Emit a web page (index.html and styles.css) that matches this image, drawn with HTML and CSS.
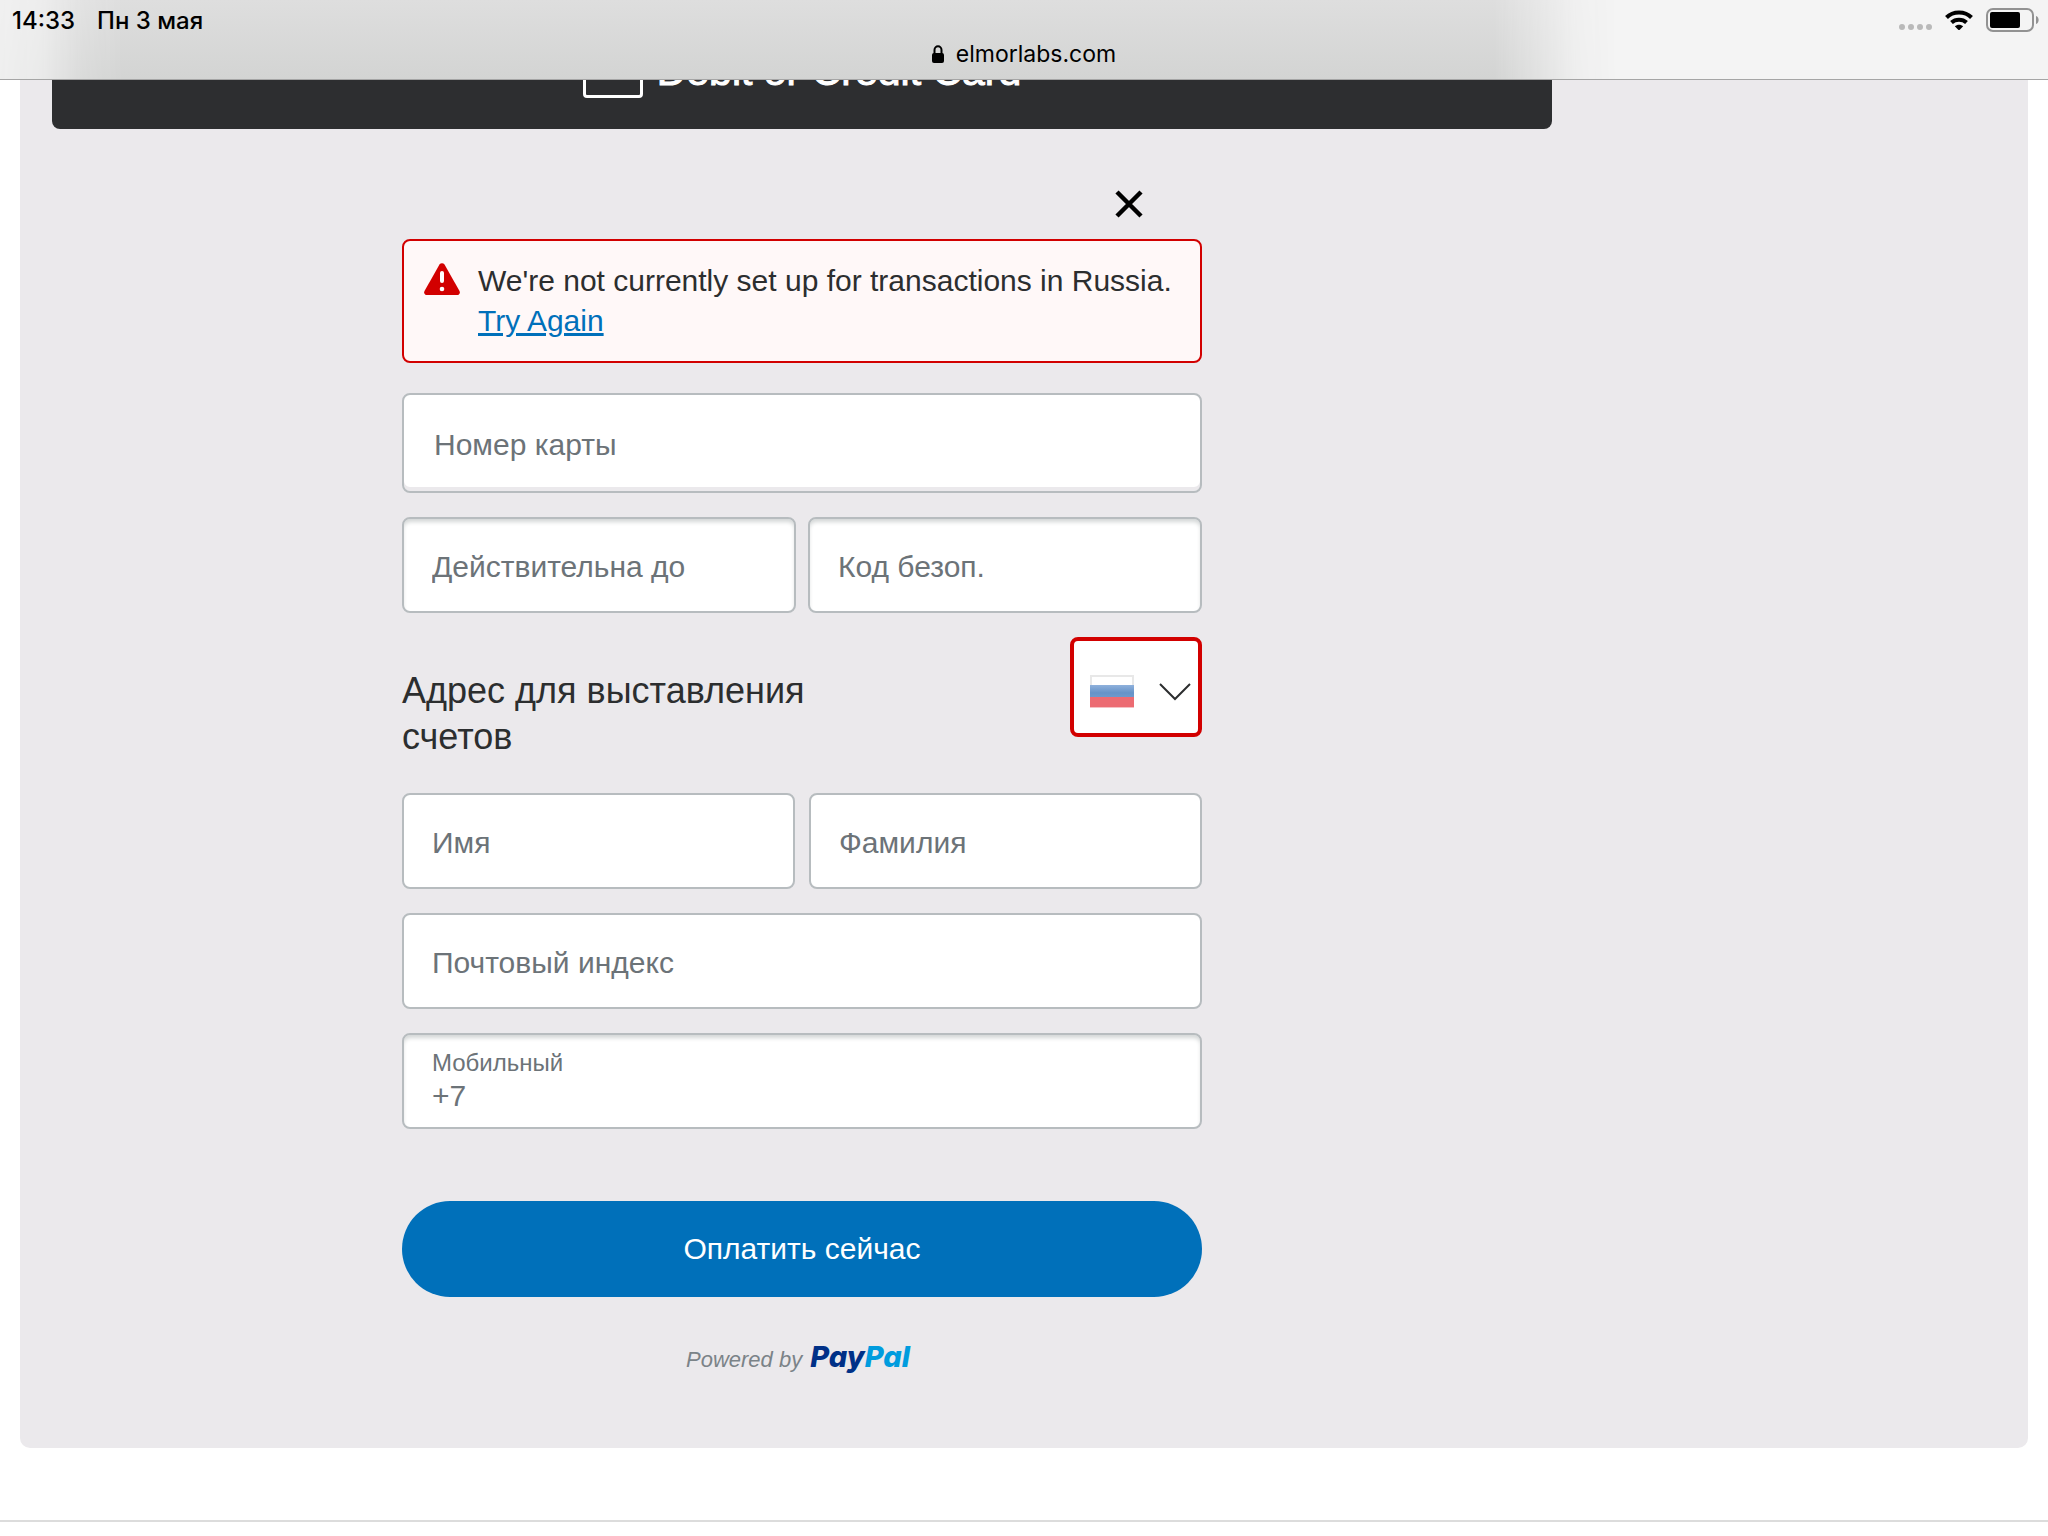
FILE: index.html
```html
<!DOCTYPE html>
<html lang="ru">
<head>
  <meta charset="UTF-8">
  <meta name="viewport" content="width=device-width, initial-scale=1.0">
  <title>elmorlabs.com</title>
  <link rel="stylesheet" href="styles.css">
</head>
<body>
<header class="browser-bar">
  <div class="status">
    <div class="status-left">
      <span>14:33</span>
      <span>Пн 3 мая</span>
    </div>
    <div class="status-right">
      <div class="dots"><i></i><i></i><i></i><i></i></div>
      <svg class="wifi" width="28" height="20" viewBox="0 0 28 20">
        <g fill="none" stroke="#000" stroke-width="4">
          <path d="M1.500 7.500C8 .8 20 .8 26.500 7.500"/>
          <path d="M6.500 12.500C10.500 8.700 17.500 8.700 21.500 12.500"/>
        </g>
        <path d="M14 20.500l-4.200-4.200c2.200-2.200 6.200-2.200 8.400 0z"/>
      </svg>
      <svg class="battery" width="54" height="24" viewBox="0 0 54 24">
        <rect x="1" y="1" width="46" height="22" rx="6" fill="none" stroke="#929292" stroke-width="2"/>
        <rect x="4" y="4" width="30" height="16" rx="2"/>
        <path d="M50 8c3.500 1 3.500 7 0 8z" fill="#929292"/>
      </svg>
    </div>
  </div>
  <div class="address">
    <svg width="12" height="18" viewBox="0 0 12 18">
      <path d="M2.500 9V5a3.500 3.800 0 0 1 7 0v4" fill="none" stroke="#000" stroke-width="2"/>
      <rect y="8" width="12" height="10" rx="2"/>
    </svg>
    <span>elmorlabs.com</span>
  </div>
</header>

<main class="panel">
  <div class="checkout">
    <button class="card-button" type="button"><span class="card-icon"></span>Debit or Credit Card</button>

    <form class="card-form">
      <button class="close" type="button" aria-label="Close">
        <svg width="28" height="28" viewBox="0 0 28 28"><path d="M2 2l24 24M26 2L2 26" stroke="#000" stroke-width="4.500"/></svg>
      </button>

      <div class="alert" role="alert">
        <svg width="36" height="32" viewBox="0 0 36 32">
          <path d="M15.500 1.500a3 3 0 0 1 5 0l15 26.500c1 2-.2 4-2.500 4H3c-2.300 0-3.500-2-2.500-4z" fill="#d20000"/>
          <path d="M18 10v8" stroke="#fff" stroke-width="4" stroke-linecap="round"/>
          <circle cx="18" cy="26" r="2.300" fill="#fff"/>
        </svg>
        <p>We're not currently set up for transactions in Russia. <a href="#">Try Again</a></p>
      </div>

      <input class="field number" type="text" placeholder="Номер карты" aria-label="Номер карты">
      <div class="row">
        <input class="field inset" type="text" placeholder="Действительна до" aria-label="Действительна до">
        <input class="field inset" type="text" placeholder="Код безоп." aria-label="Код безоп.">
      </div>

      <div class="billing">
        <h2 id="billing-title">Адрес для выставления счетов</h2>
        <div class="country">
          <select aria-labelledby="billing-title">
            <option value="RU" aria-label="RU"></option>
          </select>
          <svg class="flag" width="44" height="33" viewBox="0 0 44 33">
            <defs>
              <linearGradient id="blue" x1="0" y1="0" x2="0" y2="1">
                <stop offset="0" stop-color="#8fb1dc"/>
                <stop offset="0.600" stop-color="#6693c8"/>
                <stop offset="1" stop-color="#6f9acd"/>
              </linearGradient>
            </defs>
            <rect width="44" height="33" fill="#e8e8e8"/>
            <rect x="2" y="2" width="40" height="9" fill="#fff"/>
            <rect y="10" width="44" height="13" fill="url(#blue)"/>
            <rect y="22" width="44" height="10" fill="#ec6b72"/>
            <rect y="32" width="44" height="1" fill="#f5c0c3"/>
          </svg>
          <svg class="chevron" width="32" height="18" viewBox="0 0 32 18">
            <path d="M1 1l15 15L31 1" fill="none" stroke="#2c2e2f" stroke-width="2"/>
          </svg>
        </div>
      </div>

      <div class="row names">
        <input class="field" type="text" placeholder="Имя" aria-label="Имя">
        <input class="field" type="text" placeholder="Фамилия" aria-label="Фамилия">
      </div>
      <input class="field" type="text" placeholder="Почтовый индекс" aria-label="Почтовый индекс">
      <div class="field inset phone">
        <label for="phone">Мобильный</label>
        <input id="phone" type="tel" value="+7">
      </div>

      <button class="pay" type="submit">Оплатить сейчас</button>
    </form>

    <div class="powered">Powered by <span class="logo">Pay<b>Pal</b></span></div>
  </div>
</main>
<hr class="divider">
</body>
</html>
```
FILE: styles.css
```css
* {
  box-sizing: border-box;
}

body {
  margin: 0;
  background: #fff;
  color: #2c2e2f;
  font-family: "Liberation Sans", Arial, sans-serif;
  font-size: 30px;
}

button, input, select {
  margin: 0;
  font: inherit;
}

/* browser bar over the page */
.browser-bar {
  position: fixed;
  z-index: 10;
  top: 0;
  left: 0;
  right: 0;
  height: 80px;
  background: #f4f4f4;
  border-bottom: 1px solid #a5a5a5;
  color: #000;
  font-family: Inter, sans-serif;
  font-size: 24px;
}

.browser-bar::before {
  content: "";
  position: absolute;
  z-index: -1;
  inset: 0;
  background: linear-gradient(#dedede, #d3d4d3);
  mask-image: linear-gradient(90deg, rgba(0,0,0,0.15), rgba(0,0,0,0.3) 2%, rgba(0,0,0,0.8) 4%, #000 6%, #000 73%, rgba(0,0,0,0.6) 75%, rgba(0,0,0,0.15) 77%, transparent 79%);
}

.status {
  display: flex;
  justify-content: space-between;
  height: 40px;
  padding: 0 8px 0 12px;
  line-height: 42px;
  font-weight: 500;
}

.status-left {
  display: flex;
  gap: 22px;
}

.status-right {
  display: flex;
  align-items: center;
}

.dots {
  display: flex;
  gap: 3px;
  margin: 14px 13px 0 0;
}

.dots i {
  width: 6px;
  height: 6px;
  border-radius: 3px;
  background: #b9b9b9;
}

.wifi {
  margin-right: 13px;
}

.address {
  display: flex;
  justify-content: center;
  align-items: center;
  gap: 12px;
  height: 28px;
  font-size: 23px;
}

/* payment panel */
.panel {
  margin: 0 20px;
  padding: 14px 32px 68px;
  background: #ebe9ec;
  border-radius: 0 0 10px 10px;
}

.checkout {
  max-width: 1500px;
}

.card-button {
  display: flex;
  justify-content: center;
  align-items: center;
  gap: 14px;
  width: 100%;
  height: 115px;
  padding: 0;
  border: 0;
  border-radius: 8px;
  background: #2d2e30;
  color: #fff;
  font-size: 41px;
  -webkit-text-stroke: 1px #fff;
}

.card-icon {
  width: 60px;
  height: 52px;
  border: 3px solid #fff;
  border-radius: 4px;
}

.card-form {
  display: flex;
  flex-direction: column;
  gap: 24px;
  max-width: 800px;
  margin: 0 auto;
  padding-top: 61px;
}

.close {
  align-self: flex-end;
  width: 28px;
  height: 28px;
  margin: 0 59px -3px 0;
  padding: 0;
  border: 0;
  background: none;
}

.close svg {
  display: block;
}

.alert {
  display: flex;
  align-items: flex-start;
  gap: 18px;
  height: 124px;
  margin-bottom: 6px;
  padding: 20px 16px 20px 20px;
  border: 2px solid #d20000;
  border-radius: 8px;
  background: #fff8f8;
  line-height: 40px;
}

.alert svg {
  flex: none;
  margin-top: 2px;
}

.alert p {
  margin: 0;
}

.alert a {
  display: block;
  color: #0070ba;
}

.row {
  display: flex;
  gap: 12px;
}

.names {
  gap: 14px;
}

.field {
  flex: 1 1 auto;
  width: 100%;
  min-width: 0;
  height: 96px;
  padding: 4px 28px 0;
  border: 2px solid #b7bcbf;
  border-radius: 8px;
  background: #fff;
  color: #6c7378;
}

.field::placeholder {
  color: #6c7378;
  opacity: 1;
}

.number {
  height: 100px;
  padding: 4px 30px 0;
  box-shadow: inset 0 -4px #ebe9ec;
}

.inset {
  box-shadow: inset 0 4px 4px -1px #d3d6d6;
}

.billing {
  display: flex;
  justify-content: space-between;
  align-items: flex-start;
  margin-bottom: 9px;
}

.billing h2 {
  max-width: 480px;
  margin: 31px 0 0;
  font-size: 36px;
  font-weight: normal;
  line-height: 46px;
}

.country {
  position: relative;
  width: 132px;
  height: 100px;
}

.country select {
  width: 100%;
  height: 100%;
  border: 4px solid #d20000;
  border-radius: 8px;
  background: #fff;
  appearance: none;
}

.flag, .chevron {
  position: absolute;
  pointer-events: none;
}

.flag {
  left: 20px;
  top: 38px;
}

.chevron {
  right: 11px;
  top: 46px;
}

.phone {
  display: flex;
  flex-direction: column;
  padding-top: 14px;
}

.phone label {
  font-size: 24px;
  line-height: 28px;
}

.phone input {
  height: 38px;
  padding: 0;
  border: 0;
  outline: 0;
  background: none;
  color: inherit;
}

.pay {
  height: 96px;
  margin-top: 48px;
  border: 0;
  border-radius: 48px;
  background: #0070ba;
  color: #fff;
}

.powered {
  display: flex;
  justify-content: center;
  align-items: baseline;
  gap: 8px;
  margin-top: 40px;
  padding-right: 8px;
  color: #7b8388;
  font-size: 22px;
  font-style: italic;
  line-height: 40px;
}

.logo {
  color: #003087;
  font-family: Inter, sans-serif;
  font-size: 29px;
  font-weight: 800;
}

.logo b {
  color: #009cde;
  font-weight: 800;
}

.divider {
  height: 2px;
  margin: 72px 0 0;
  border: 0;
  background: #dcdcdc;
}
```
